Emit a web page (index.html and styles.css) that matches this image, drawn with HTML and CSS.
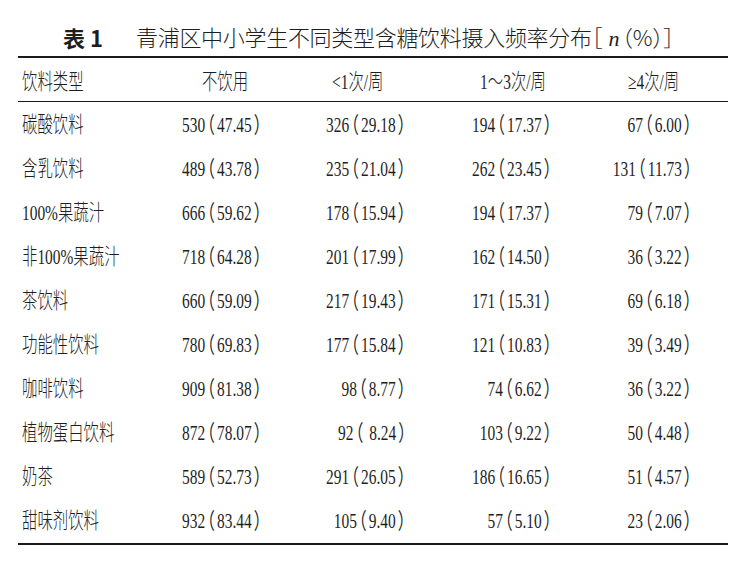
FILE: index.html
```html
<!DOCTYPE html>
<html lang="zh-CN">
<head>
<meta charset="utf-8">
<title>表1</title>
<link rel="stylesheet" href="styles.css">
</head>
<body>
<div class="page">
  <div class="caption">
    <span class="tno">表 1</span>
    <span class="ttl">青浦区中小学生不同类型含糖饮料摄入频率分布<span class="pn">［</span><i class="it">n</i><span class="pn">（%）］</span></span>
  </div>
  <div class="table">
    <div class="row head">
      <div class="c c1"><span class="t">饮料类型</span></div>
      <div class="c c2"><span class="t">不饮用</span></div>
      <div class="c c3"><span class="t">&lt;1次/周</span></div>
      <div class="c c4"><span class="t">1～3次/周</span></div>
      <div class="c c5"><span class="t">≥4次/周</span></div>
    </div>
    <div class="body">
      <div class="row">
        <div class="c c1"><span class="t">碳酸饮料</span></div>
        <div class="c c2"><span class="t">530<span class="lp">（</span>47.45<span class="rp">）</span></span></div>
        <div class="c c3"><span class="t">326<span class="lp">（</span>29.18<span class="rp">）</span></span></div>
        <div class="c c4"><span class="t">194<span class="lp">（</span>17.37<span class="rp">）</span></span></div>
        <div class="c c5"><span class="t">67<span class="lp">（</span>6.00<span class="rp">）</span></span></div>
      </div>
      <div class="row">
        <div class="c c1"><span class="t">含乳饮料</span></div>
        <div class="c c2"><span class="t">489<span class="lp">（</span>43.78<span class="rp">）</span></span></div>
        <div class="c c3"><span class="t">235<span class="lp">（</span>21.04<span class="rp">）</span></span></div>
        <div class="c c4"><span class="t">262<span class="lp">（</span>23.45<span class="rp">）</span></span></div>
        <div class="c c5"><span class="t">131<span class="lp">（</span>11.73<span class="rp">）</span></span></div>
      </div>
      <div class="row">
        <div class="c c1"><span class="t">100%果蔬汁</span></div>
        <div class="c c2"><span class="t">666<span class="lp">（</span>59.62<span class="rp">）</span></span></div>
        <div class="c c3"><span class="t">178<span class="lp">（</span>15.94<span class="rp">）</span></span></div>
        <div class="c c4"><span class="t">194<span class="lp">（</span>17.37<span class="rp">）</span></span></div>
        <div class="c c5"><span class="t">79<span class="lp">（</span>7.07<span class="rp">）</span></span></div>
      </div>
      <div class="row">
        <div class="c c1"><span class="t">非100%果蔬汁</span></div>
        <div class="c c2"><span class="t">718<span class="lp">（</span>64.28<span class="rp">）</span></span></div>
        <div class="c c3"><span class="t">201<span class="lp">（</span>17.99<span class="rp">）</span></span></div>
        <div class="c c4"><span class="t">162<span class="lp">（</span>14.50<span class="rp">）</span></span></div>
        <div class="c c5"><span class="t">36<span class="lp">（</span>3.22<span class="rp">）</span></span></div>
      </div>
      <div class="row">
        <div class="c c1"><span class="t">茶饮料</span></div>
        <div class="c c2"><span class="t">660<span class="lp">（</span>59.09<span class="rp">）</span></span></div>
        <div class="c c3"><span class="t">217<span class="lp">（</span>19.43<span class="rp">）</span></span></div>
        <div class="c c4"><span class="t">171<span class="lp">（</span>15.31<span class="rp">）</span></span></div>
        <div class="c c5"><span class="t">69<span class="lp">（</span>6.18<span class="rp">）</span></span></div>
      </div>
      <div class="row">
        <div class="c c1"><span class="t">功能性饮料</span></div>
        <div class="c c2"><span class="t">780<span class="lp">（</span>69.83<span class="rp">）</span></span></div>
        <div class="c c3"><span class="t">177<span class="lp">（</span>15.84<span class="rp">）</span></span></div>
        <div class="c c4"><span class="t">121<span class="lp">（</span>10.83<span class="rp">）</span></span></div>
        <div class="c c5"><span class="t">39<span class="lp">（</span>3.49<span class="rp">）</span></span></div>
      </div>
      <div class="row">
        <div class="c c1"><span class="t">咖啡饮料</span></div>
        <div class="c c2"><span class="t">909<span class="lp">（</span>81.38<span class="rp">）</span></span></div>
        <div class="c c3"><span class="t">98<span class="lp">（</span>8.77<span class="rp">）</span></span></div>
        <div class="c c4"><span class="t">74<span class="lp">（</span>6.62<span class="rp">）</span></span></div>
        <div class="c c5"><span class="t">36<span class="lp">（</span>3.22<span class="rp">）</span></span></div>
      </div>
      <div class="row">
        <div class="c c1"><span class="t">植物蛋白饮料</span></div>
        <div class="c c2"><span class="t">872<span class="lp">（</span>78.07<span class="rp">）</span></span></div>
        <div class="c c3"><span class="t">92<span class="lp">（</span> 8.24<span class="rp">）</span></span></div>
        <div class="c c4"><span class="t">103<span class="lp">（</span>9.22<span class="rp">）</span></span></div>
        <div class="c c5"><span class="t">50<span class="lp">（</span>4.48<span class="rp">）</span></span></div>
      </div>
      <div class="row">
        <div class="c c1"><span class="t">奶茶</span></div>
        <div class="c c2"><span class="t">589<span class="lp">（</span>52.73<span class="rp">）</span></span></div>
        <div class="c c3"><span class="t">291<span class="lp">（</span>26.05<span class="rp">）</span></span></div>
        <div class="c c4"><span class="t">186<span class="lp">（</span>16.65<span class="rp">）</span></span></div>
        <div class="c c5"><span class="t">51<span class="lp">（</span>4.57<span class="rp">）</span></span></div>
      </div>
      <div class="row">
        <div class="c c1"><span class="t">甜味剂饮料</span></div>
        <div class="c c2"><span class="t">932<span class="lp">（</span>83.44<span class="rp">）</span></span></div>
        <div class="c c3"><span class="t">105<span class="lp">（</span>9.40<span class="rp">）</span></span></div>
        <div class="c c4"><span class="t">57<span class="lp">（</span>5.10<span class="rp">）</span></span></div>
        <div class="c c5"><span class="t">23<span class="lp">（</span>2.06<span class="rp">）</span></span></div>
      </div>
    </div>
  </div>
</div>
</body>
</html>
```

FILE: styles.css
```css
html, body {
  margin: 0;
  padding: 0;
  background: #ffffff;
}

.page {
  width: 746px;
  height: 563px;
  color: #1e1e1e;
  font-family: "Liberation Serif", "Noto Sans CJK SC", serif;
}

.caption {
  display: flex;
  align-items: center;
  height: 30px;
  padding: 22px 0 4px 63px;
  font-size: 22px;
  line-height: 30px;
  white-space: nowrap;
}

.tno {
  font-family: "Noto Sans CJK SC", sans-serif;
  font-weight: 700;
  margin-right: 33px;
}

.ttl {
  font-family: "Noto Sans CJK SC", sans-serif;
  font-weight: 300;
  letter-spacing: -0.3px;
}

.pn {
  font-feature-settings: "halt";
}

.it {
  font-family: "Liberation Serif", serif;
  font-style: italic;
  margin: 0 3px 0 6px;
}

.table {
  width: 710px;
  margin-left: 18px;
  border-top: 2px solid #1a1a1a;
  border-bottom: 2px solid #1a1a1a;
}

.row {
  display: grid;
  grid-template-columns: 132px 150px 120px 180px 128px;
  height: 44px;
  align-items: center;
}

.head {
  height: 43px;
  border-bottom: 1px solid #1a1a1a;
}

.head .c {
  padding-top: 4px;
}

.body {
  padding-top: 1px;
}

.c {
  display: flex;
  align-items: center;
  font-size: 22px;
  line-height: 26px;
  white-space: nowrap;
}

.t {
  display: inline-block;
  transform: scaleX(0.7);
  font-feature-settings: "halt";
}

.lp {
  margin-left: 3px;
  margin-right: 3px;
}

.rp {
  margin-left: 3px;
}

.c1 {
  justify-content: flex-start;
  padding-left: 4px;
}

.c1 .t {
  transform-origin: left center;
  font-weight: 300;
}

.body .c2, .body .c3, .body .c4, .body .c5 {
  justify-content: flex-end;
}

.body .c2 .t, .body .c3 .t, .body .c4 .t, .body .c5 .t {
  transform-origin: right center;
}

.body .c2 { padding-right: 38px; }
.body .c3 { padding-right: 14px; }
.body .c4 { padding-right: 48px; }
.body .c5 { padding-right: 36px; }

.head .c2, .head .c3, .head .c4, .head .c5 {
  justify-content: center;
}

.head .c .t {
  font-weight: 300;
  font-feature-settings: normal;
}

.head .c2 .t, .head .c3 .t, .head .c4 .t, .head .c5 .t {
  transform-origin: center center;
}

.head .c3 { padding-right: 4px; }
.head .c4 { padding-left: 6px; }
.head .c5 { padding-right: 20px; }
```
